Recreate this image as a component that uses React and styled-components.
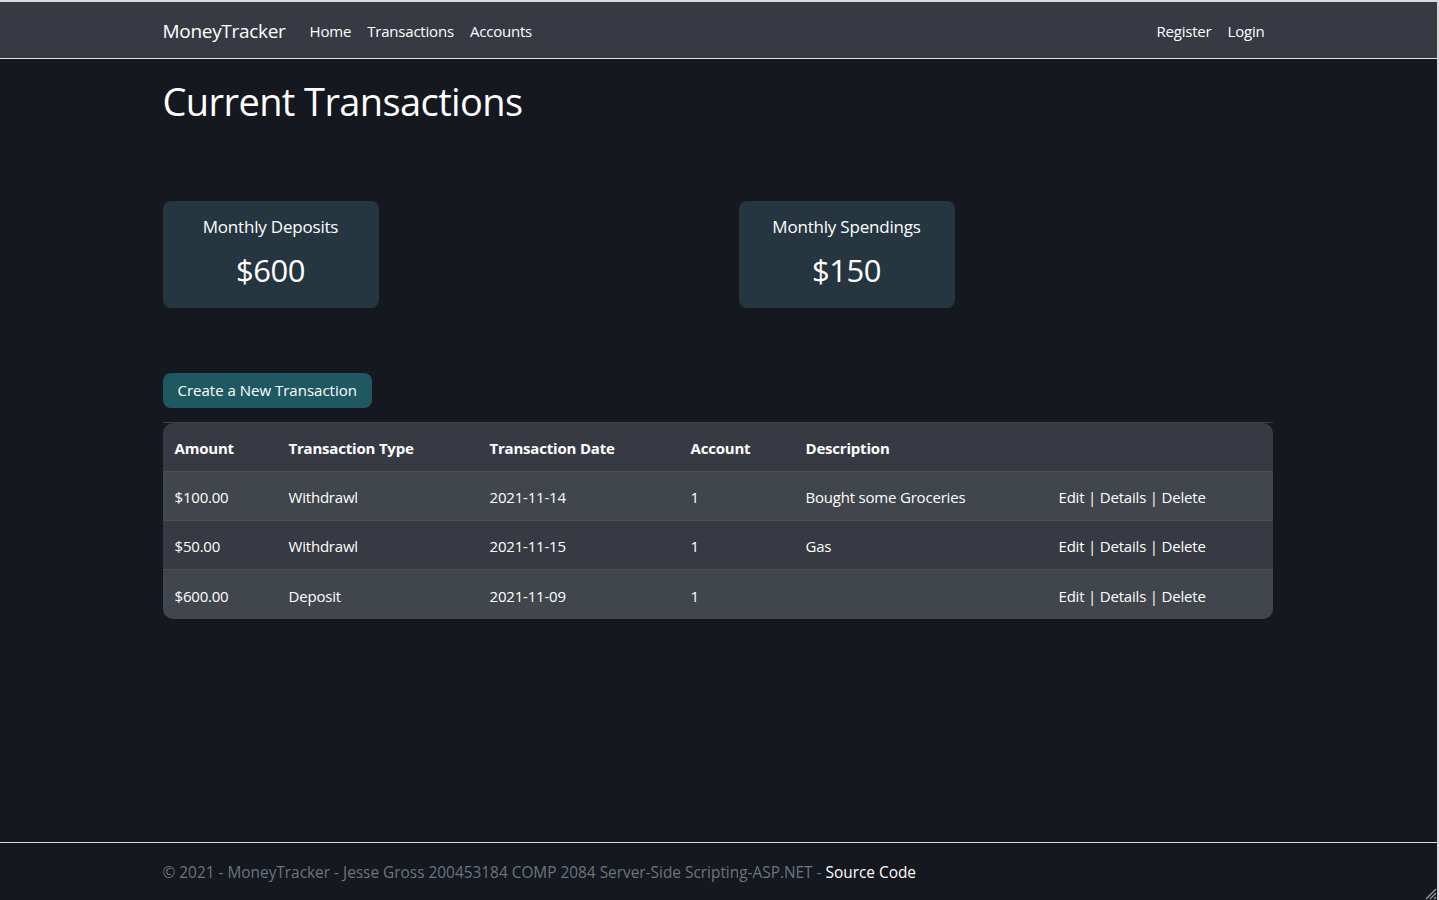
import React from 'react'
import styled, { createGlobalStyle } from 'styled-components'

const GlobalStyle = createGlobalStyle`
  html, body {
    margin: 0;
    padding: 0;
    background: #15181f;
  }
  body {
    font-family: "Open Sans", "Noto Sans", sans-serif;
    color: #fff;
  }
`

const Frame = styled.div`
  min-height: 898px;
  border-top: 2px solid #d8d9db;
  border-right: 2px solid #d8d9db;
  display: flex;
  flex-direction: column;
  position: relative;
`

const Container = styled.div`
  width: 1110px;
  margin: 0 auto;
  padding-right: 2px;
`

const NavBar = styled.nav`
  background: #373a42;
  border-bottom: 1px solid #e2e3e5;
  height: 56px;
  display: flex;
  align-items: center;
`

const NavInner = styled(Container)`
  display: flex;
  align-items: center;
  padding-top: 2px;
`

const Brand = styled.a`
  font-size: 19px;
  color: #fff;
  margin-right: 24px;
  letter-spacing: -0.3px;
`

const NavLink = styled.a`
  font-size: 15px;
  color: #fff;
  margin-right: 16px;
  letter-spacing: -0.2px;
  &:last-child { margin-right: 0; }
`

const NavGroup = styled.div`
  display: flex;
  align-items: center;
  margin-left: ${p => (p.$right ? 'auto' : '0')};
  padding-right: ${p => (p.$right ? '8px' : '0')};
`

const Main = styled(Container)`
  flex: 1;
`

const Title = styled.h1`
  font-size: 38px;
  font-weight: 400;
  margin: 20px 0 76px;
  letter-spacing: -0.6px;
  line-height: 1.2;
`

const Summary = styled.div`
  display: grid;
  grid-template-columns: 1fr 1fr;
  column-gap: 42px;
  margin-bottom: 65px;
`

const StatCard = styled.div`
  width: 216px;
  height: 107px;
  box-sizing: border-box;
  background: #263640;
  border-radius: 8px;
  display: flex;
  flex-direction: column;
  align-items: center;
  padding-top: 14px;
`

const StatLabel = styled.div`
  font-size: 17px;
  letter-spacing: -0.2px;
  line-height: 24px;
`

const StatValue = styled.div`
  font-size: 31px;
  letter-spacing: -0.5px;
  margin-top: 11px;
  line-height: 40px;
`

const Button = styled.button`
  background: #1e5962;
  color: #fff;
  border: none;
  border-radius: 8px;
  height: 35px;
  padding: 0 15px;
  font-family: inherit;
  font-size: 15px;
  letter-spacing: 0;
  cursor: pointer;
  margin-bottom: 14px;
`

const Table = styled.table`
  width: 100%;
  border-collapse: separate;
  border-spacing: 0;
  border-top: 1px solid #3c4047;
  font-size: 15px;
  letter-spacing: -0.2px;
`

const HeadCell = styled.th`
  background: #373a42;
  text-align: left;
  font-weight: 700;
  height: 49px;
  padding: 2px 12px 0;
  box-sizing: border-box;
  border-bottom: 1px solid #4a4e56;
  width: ${p => p.$w || 'auto'};
  &:first-child { border-top-left-radius: 10px; }
  &:last-child { border-top-right-radius: 10px; }
`

const Row = styled.tr`
  background: ${p => (p.$striped ? '#41454c' : '#373a42')};
  &:last-child td:first-child { border-bottom-left-radius: 10px; }
  &:last-child td:last-child { border-bottom-right-radius: 10px; }
  &:last-child td { border-bottom: none; }
`

const Cell = styled.td`
  height: 49px;
  padding: 3px 12px 0;
  box-sizing: border-box;
  border-bottom: 1px solid #4a4e56;
`

const Footer = styled.footer`
  border-top: 1px solid #dadbdd;
  height: 57px;
  display: flex;
  align-items: center;
  margin-top: auto;
`

const FooterText = styled(Container)`
  color: #6c757d;
  font-size: 15.4px;
  letter-spacing: 0;
  padding-top: 2px;
`

const FooterLink = styled.a`
  color: #fff;
`

const Grip = styled.svg`
  position: absolute;
  right: 0;
  bottom: 0;
`

const rows = [
  { amount: '$100.00', type: 'Withdrawl', date: '2021-11-14', account: '1', desc: 'Bought some Groceries' },
  { amount: '$50.00', type: 'Withdrawl', date: '2021-11-15', account: '1', desc: 'Gas' },
  { amount: '$600.00', type: 'Deposit', date: '2021-11-09', account: '1', desc: '' },
]

export default function App() {
  return (
    <Frame>
      <GlobalStyle />
      <NavBar>
        <NavInner>
          <NavGroup>
            <Brand>MoneyTracker</Brand>
            <NavLink>Home</NavLink>
            <NavLink>Transactions</NavLink>
            <NavLink>Accounts</NavLink>
          </NavGroup>
          <NavGroup $right>
            <NavLink>Register</NavLink>
            <NavLink>Login</NavLink>
          </NavGroup>
        </NavInner>
      </NavBar>

      <Main>
        <Title>Current Transactions</Title>

        <Summary>
          <StatCard>
            <StatLabel>Monthly Deposits</StatLabel>
            <StatValue>$600</StatValue>
          </StatCard>
          <StatCard>
            <StatLabel>Monthly Spendings</StatLabel>
            <StatValue>$150</StatValue>
          </StatCard>
        </Summary>

        <Button>Create a New Transaction</Button>

        <Table>
          <thead>
            <tr>
              <HeadCell $w="114px">Amount</HeadCell>
              <HeadCell $w="201px">Transaction Type</HeadCell>
              <HeadCell $w="201px">Transaction Date</HeadCell>
              <HeadCell $w="115px">Account</HeadCell>
              <HeadCell $w="253px">Description</HeadCell>
              <HeadCell></HeadCell>
            </tr>
          </thead>
          <tbody>
            {rows.map((r, i) => (
              <Row key={i} $striped={i % 2 === 0}>
                <Cell>{r.amount}</Cell>
                <Cell>{r.type}</Cell>
                <Cell>{r.date}</Cell>
                <Cell>{r.account}</Cell>
                <Cell>{r.desc}</Cell>
                <Cell>Edit | Details | Delete</Cell>
              </Row>
            ))}
          </tbody>
        </Table>
      </Main>

      <Footer>
        <FooterText>
          © 2021 - MoneyTracker - Jesse Gross 200453184 COMP 2084 Server-Side Scripting-ASP.NET - <FooterLink>Source Code</FooterLink>
        </FooterText>
      </Footer>

      <Grip width="14" height="14" viewBox="0 0 14 14">
        <path d="M13 3 L3 13 M13 7 L7 13 M13 11 L11 13" stroke="#9a9ca0" strokeWidth="1.2" />
      </Grip>
    </Frame>
  )
}
